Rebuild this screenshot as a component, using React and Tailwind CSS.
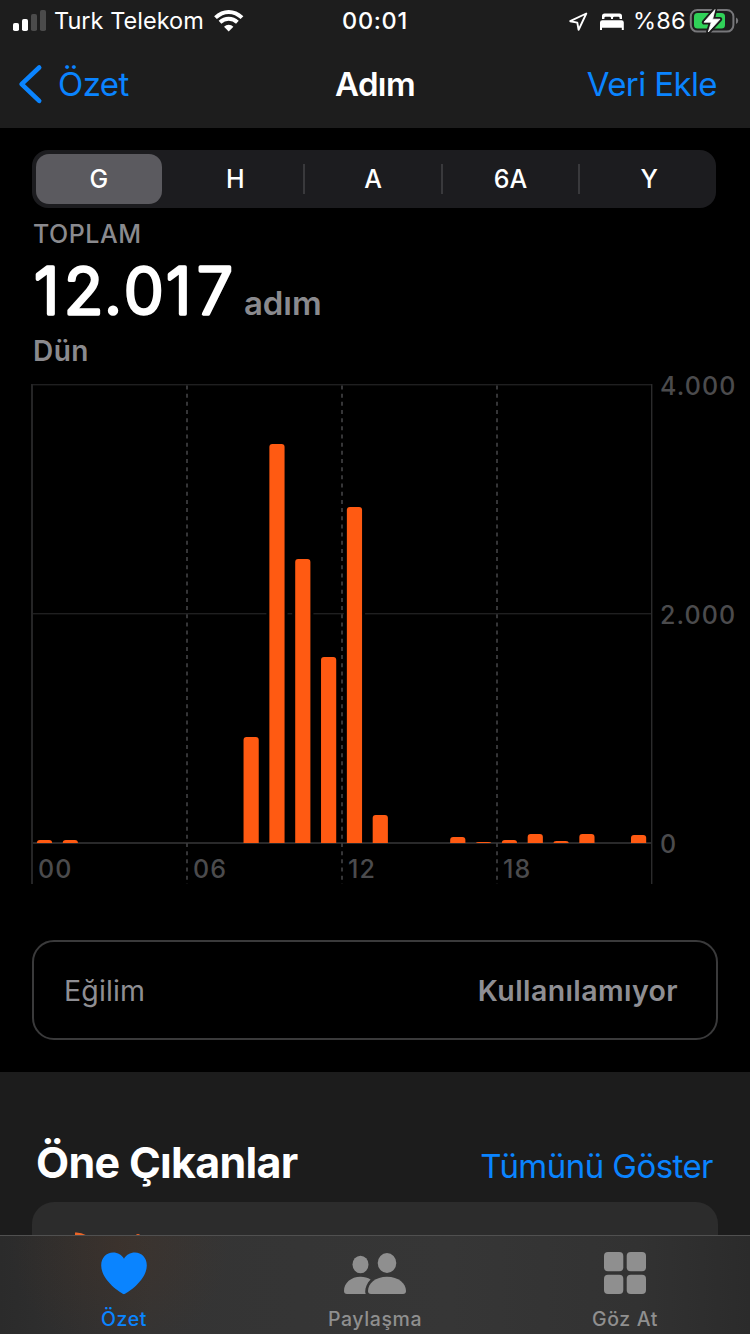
const BARS = [
  [0, 840], [1, 840], [8, 737], [9, 444], [10, 559], [11, 657], [12, 507], [13, 815],
  [16, 837], [17, 842], [18, 840], [19, 834], [20, 841], [21, 834], [23, 835],
];
const BASE = 843;
const barX = (hour) => 32 + hour * 25.83 + 4.9;

function barPath(hour, top) {
  const x = barX(hour);
  const w = 15.2;
  const ry = Math.min(3, BASE - top);
  return `M${x} ${BASE}V${top + ry}Q${x} ${top} ${x + 3} ${top}H${x + w - 3}Q${x + w} ${top} ${x + w} ${top + ry}V${BASE}Z`;
}

function StatusBar() {
  return (
    <div className="grid h-10 grid-cols-3 items-center text-[23.5px] leading-[40px] text-white">
      <div className="flex h-10 items-center pl-3">
        <svg width="36" height="40" viewBox="12 0 36 40">
          <rect x="13" y="22" width="6" height="8" rx="1.8" fill="#fff" />
          <rect x="22" y="18" width="6" height="12" rx="1.8" fill="#fff" />
          <rect x="31" y="13" width="6" height="17" rx="1.8" fill="#4b4b4b" />
          <rect x="40" y="9" width="6" height="21" rx="1.8" fill="#4b4b4b" />
        </svg>
        <span className="ml-[6px] pt-px tracking-[0.02px] whitespace-nowrap">Turk Telekom</span>
        <svg className="ml-[9px] shrink-0" width="32" height="40" viewBox="213 0 32 40" fill="none" stroke="#fff">
          <path d="M215.5 16.6Q221.5 10.9 228.7 10.9T242 16.6" strokeWidth="4" />
          <path d="M220 21.2Q223.8 17.7 228.7 17.7T237.4 21.2" strokeWidth="4" />
          <path d="M224 25.7Q226 23.8 228.7 23.8T233.4 25.7L228.7 30.6Z" fill="#fff" stroke="none" />
        </svg>
      </div>
      <div className="pt-px text-center font-[550] tracking-[0.7px]">00:01</div>
      <div className="flex h-10 items-center justify-end pr-[11px]">
        <svg width="60" height="40" viewBox="568 0 60 40">
          <path d="M586.3 12.5L570.2 20.2L577.3 21.6L578.6 28.8Z" fill="none" stroke="#fff" strokeWidth="1.9" strokeLinejoin="round" />
          <path d="M602 18V15Q602 12.5 604.5 12.5H619.5Q622 12.5 622 15V18H619.6V17Q619.6 15.8 618.4 15.8H614.2Q613 15.8 613 17V18H611V17Q611 15.8 609.8 15.8H605.6Q604.4 15.8 604.4 17V18Z" fill="#fff" />
          <path d="M600 29V21.5Q600 19.2 602.3 19.2H621.5Q623.8 19.2 623.8 21.5V29H621.8V26.8H602V29Z" fill="#fff" />
        </svg>
        <span className="ml-[5px] pt-px tracking-[0.3px]">%86</span>
        <svg className="ml-[3px]" width="50" height="40" viewBox="690 0 50 40">
          <rect x="691.8" y="9" width="42.6" height="21.6" rx="6.5" fill="none" stroke="#77777a" strokeWidth="2" />
          <rect x="695" y="12" width="31" height="15.5" rx="3.5" fill="#30d158" />
          <path d="M737 16.5Q739.2 17.5 739.2 19.8T737 23.1Z" fill="#77777a" />
          <path d="M716 8.5L705 21.2H712.3L709.3 31L721 18.2H713.6Z" fill="#fff" stroke="#1c1c1c" strokeWidth="4.5" strokeLinejoin="round" />
          <path d="M716 8.5L705 21.2H712.3L709.3 31L721 18.2H713.6Z" fill="#fff" stroke="#fff" strokeWidth="0.8" strokeLinejoin="round" />
        </svg>
      </div>
    </div>
  );
}

function NavBar() {
  return (
    <div className="grid h-[88px] grid-cols-[1fr_auto_1fr] items-center text-[33px] leading-[88px] tracking-[-0.6px]">
      <div className="flex h-[88px] items-center pl-[18px] text-[#0a84ff]">
        <svg width="26" height="88" viewBox="18 40 26 88" fill="none" stroke="#0a84ff" strokeWidth="4.6" strokeLinecap="round" strokeLinejoin="round">
          <path d="M39.2 67.5L21.6 84.2L39.2 100.8" />
        </svg>
        <span className="ml-[14px]">Özet</span>
      </div>
      <div className="font-semibold text-white">Adım</div>
      <div className="pr-[33px] text-right text-[#0a84ff]">Veri Ekle</div>
    </div>
  );
}

function Segments() {
  return (
    <div className="mx-auto mt-[22px] h-[58px] w-[684px] shrink-0 rounded-[16px] bg-[#1c1c1f] -translate-x-px">
      <div className="-ml-0.5 grid h-[58px] w-[688px] grid-cols-5 items-center text-center text-[25px] font-[450] text-white">
        <div className="mx-auto h-[50px] w-[126px] rounded-[13px] bg-[#5b5a5f] font-medium leading-[51px]">G</div>
        <div className="h-[30px] border-r-2 border-[#39393c] leading-[31px]">H</div>
        <div className="h-[30px] border-r-2 border-[#39393c] leading-[31px]">A</div>
        <div className="h-[30px] border-r-2 border-[#39393c] leading-[31px]">6A</div>
        <div className="h-[30px] leading-[31px]">Y</div>
      </div>
    </div>
  );
}

function Chart() {
  return (
    <svg className="block shrink-0" width="750" height="514" viewBox="0 371 750 514">
      <g fill="#1f1f20">
        <rect x="32" y="384" width="620" height="1.4" />
        <rect x="32" y="613" width="620" height="1.4" />
      </g>
      <rect x="32" y="842" width="620" height="2" fill="#29292a" />
      <rect x="31" y="384" width="2" height="500" fill="#252526" />
      <rect x="651" y="384" width="1.4" height="500" fill="#2b2b2c" />
      <g stroke="#3b3b3d" strokeWidth="1.8" strokeDasharray="4 4.17">
        <path d="M187 385.5V884" />
        <path d="M342 385.5V884" />
        <path d="M497 385.5V884" />
      </g>
      {BARS.map(([hour, top]) => (
        <g key={hour}>
          {top < 613 && <rect x={barX(hour) - 3} y="611" width="21.2" height="5" fill="#000" />}
          <path d={barPath(hour, top)} fill="#ff5a12" />
        </g>
      ))}
      <g fill="#4b4b4d" fontSize="25" fontWeight="450" letterSpacing="1.1">
        <text x="38" y="878">00</text>
        <text x="193" y="878">06</text>
        <text x="348" y="878">12</text>
        <text x="503" y="878">18</text>
        <text x="660" y="395">4.000</text>
        <text x="660" y="624">2.000</text>
        <text x="660" y="853">0</text>
      </g>
    </svg>
  );
}

function Summary() {
  return (
    <div className="shrink-0 pl-[33px] font-semibold text-[#8a8a8e]">
      <div className="mt-2.5 h-8 text-[25px] font-[550] leading-[33px] tracking-[0.5px]">TOPLAM</div>
      <div className="flex h-[81px]">
        <svg className="-ml-[9px]" width="220" height="81" viewBox="24 250 220 81">
          <text x="34 64 104 124 166 197" y="313.8" fontSize="64" fontWeight="300" fill="#fff" stroke="#fff" strokeWidth="3.6" strokeLinejoin="round">12.017</text>
        </svg>
        <span className="pt-[5px] text-[33px] leading-[96px] tracking-[-0.1px]">adım</span>
      </div>
      <div className="h-10 text-[28px] leading-10 tracking-[0.5px]">Dün</div>
    </div>
  );
}

function TabBar() {
  return (
    <div className="grid h-[99px] shrink-0 grid-cols-3 border-t border-[#505050] bg-[radial-gradient(circle_at_120px_10px,rgba(90,50,25,0.22),transparent_110px),linear-gradient(to_right,#2b2b2b,#343434_20%,#363636_60%,#323232_85%,#2b2b2b)] text-center text-[19.5px] font-medium leading-6 tracking-[0.6px] text-[#8f8f8f]">
      <div className="flex flex-col items-center pr-0.5 pt-4 text-[#0a84ff]">
        <svg width="46" height="43" viewBox="0 0 46 43" fill="#0a84ff">
          <path d="M23 42.2C21.5 42.2 0.2 29 0.2 13.4C0.2 5.8 5.5 0.6 12 0.6C17 0.6 20.8 3 23 6.8C25.2 3 29 0.6 34 0.6C40.5 0.6 45.8 5.8 45.8 13.4C45.8 29 24.5 42.2 23 42.2Z" />
        </svg>
        <span className="mt-3">Özet</span>
      </div>
      <div className="flex flex-col items-center pt-4">
        <svg width="62" height="43" viewBox="0 0 62 43" fill="#8f8f8f">
          <ellipse cx="16.5" cy="12.5" rx="8" ry="8.8" />
          <ellipse cx="43" cy="11" rx="9.3" ry="10" />
          <path d="M0 39C0 31 7 24.8 16.5 24.8C20.5 24.8 23.8 25.7 26.6 27.4C23 31 21.2 35.5 21.2 39.5Q21.2 41 21.8 42H3Q0 42 0 39Z" />
          <path d="M24 39C24 31.5 31.5 24.8 43 24.8S62 31.5 62 39Q62 42 59 42H27Q24 42 24 39Z" />
        </svg>
        <span className="mt-3">Paylaşma</span>
      </div>
      <div className="flex flex-col items-center pt-4">
        <svg width="42" height="43" viewBox="0 0 42 43" fill="#8f8f8f">
          <rect width="19.3" height="19.3" rx="4" />
          <rect x="22.7" width="19.3" height="19.3" rx="4" />
          <rect y="22.7" width="19.3" height="19.3" rx="4" />
          <rect x="22.7" y="22.7" width="19.3" height="19.3" rx="4" />
        </svg>
        <span className="mt-3">Göz At</span>
      </div>
    </div>
  );
}

export default function App() {
  return (
    <div className="flex h-[1334px] w-[750px] flex-col overflow-hidden bg-black font-['Inter','Liberation_Sans',sans-serif]">
      <header className="shrink-0 bg-[#1d1d1d]">
        <StatusBar />
        <NavBar />
      </header>
      <main className="flex min-h-0 flex-1 flex-col overflow-hidden">
        <Segments />
        <Summary />
        <Chart />
        <div className="mx-8 mt-[55px] flex h-[100px] shrink-0 items-center justify-between rounded-[22px] border-2 border-[#3a3a3b] pl-[30px] pr-[38px] pt-0.5 text-[28.5px] text-[#8e8e93]">
          <span className="tracking-[0.15px]">Eğilim</span>
          <span className="font-semibold tracking-[0.4px]">Kullanılamıyor</span>
        </div>
        <section className="mt-8 flex h-[300px] shrink-0 flex-col bg-[#1c1c1c] px-8 pt-[60px]">
          <div className="flex h-[70px] items-baseline justify-between pl-1 pr-[5px] leading-[60px]">
            <h2 className="text-[43px] font-bold tracking-[-0.7px] text-white">Öne Çıkanlar</h2>
            <span className="text-[33px] tracking-[-0.55px] text-[#0a84ff]">Tümünü Göster</span>
          </div>
          <div className="h-[160px] rounded-[22px] bg-[#2c2c2c]">
            <svg width="160" height="40" viewBox="32 1202 160 40" fill="#ec6527">
              <path d="M75 1232.5Q82 1232 87 1236H75Z" />
              <path d="M135 1236Q138 1232 141 1236Z" />
            </svg>
          </div>
        </section>
      </main>
      <TabBar />
    </div>
  );
}
